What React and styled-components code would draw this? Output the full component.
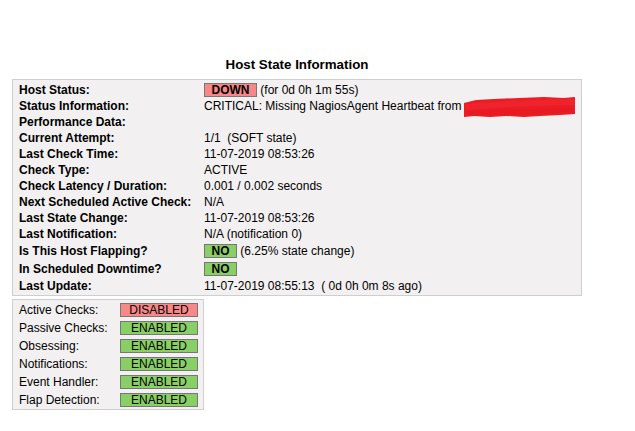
import React from 'react'
import styled, { createGlobalStyle } from 'styled-components'

const GlobalStyle = createGlobalStyle`
	body {
		margin: 0;
		background: #fff;
		color: #000;
		font-family: 'Liberation Sans', Arial, sans-serif;
		font-size: 12px;
	}
`

const PageX = styled.div`
	width: 570px;
	padding: 57px 0 0 12px;
`

const TitleX = styled.div`
	font-size: 13.33px;
	font-weight: 700;
	line-height: 16px;
	text-align: center;
	margin-bottom: 6px;
`

const StateBoxX = styled.div`
	border: 1px solid #cfcfcf;
	background: #f2f0f0;
	padding: 1px 6px;
`

const RowX = styled.div`
	display: grid;
	grid-template-columns: 185px 1fr;
	align-items: center;
	height: ${props => props.$h || 16}px;
	line-height: 14px;
	white-space: nowrap;
`

const LabelX = styled.span`
	font-weight: 700;
`

const ValueX = styled.span``

const BadgeX = styled.span`
	display: inline-block;
	line-height: 12px;
	padding: 0 6.5px;
	border: 1px solid #777;
	font-weight: 700;
	background: ${props => props.$ok ? '#88d066' : '#f88888'};
`

const RedactX = styled.span`
	position: relative;
	display: inline-block;
	width: 110px;
	height: 14px;
	vertical-align: top;

	svg {
		position: absolute;
		left: -1px;
		top: -4px;
	}
`

const ChecksBoxX = styled.div`
	display: inline-block;
	margin-top: 3px;
	border: 1px solid #cfcfcf;
	background: #f2f0f0;
	padding: 1px 5px 0 6px;
`

const CheckRowX = styled.div`
	display: grid;
	grid-template-columns: 101px 78px;
	align-items: center;
	height: 18px;
	line-height: 14px;
	white-space: nowrap;
`

const CheckBadgeX = styled.span`
	box-sizing: border-box;
	width: 78px;
	line-height: 12px;
	text-align: center;
	border: 1px solid #777;
	background: ${props => props.$ok ? '#88d066' : '#f88888'};
`

const Scribble = () => (
	<svg width="112" height="24" viewBox="0 0 112 24">
		<path d="M0 8 L12 5 L30 4 L55 3 L80 2 L100 3 L111 2 L111 19 L96 20 L76 21 L60 22 L42 21 L26 22 L10 21 L0 22 Z" fill="#ed1c24" />
		<path d="M4 12 C30 9 60 8 108 7" stroke="#f0262e" strokeWidth="6" strokeLinecap="round" fill="none" opacity="0.8" />
		<path d="M6 18 C35 17 70 17 106 15" stroke="#e51a22" strokeWidth="5" strokeLinecap="round" fill="none" opacity="0.8" />
	</svg>
)

const stateRows = [
	{ label: 'Performance Data:', value: '' },
	{ label: 'Current Attempt:', value: '1/1\u00a0\u00a0(SOFT state)' },
	{ label: 'Last Check Time:', value: '11-07-2019 08:53:26' },
	{ label: 'Check Type:', value: 'ACTIVE' },
	{ label: 'Check Latency / Duration:', value: '0.001 / 0.002 seconds' },
	{ label: 'Next Scheduled Active Check:', value: 'N/A' },
	{ label: 'Last State Change:', value: '11-07-2019 08:53:26' },
	{ label: 'Last Notification:', value: 'N/A (notification 0)' }
]

const checks = [
	{ label: 'Active Checks:', enabled: false },
	{ label: 'Passive Checks:', enabled: true },
	{ label: 'Obsessing:', enabled: true },
	{ label: 'Notifications:', enabled: true },
	{ label: 'Event Handler:', enabled: true },
	{ label: 'Flap Detection:', enabled: true }
]

const App = () => {

	return (
		<PageX>
			<GlobalStyle />
			<TitleX>Host State Information</TitleX>

			<StateBoxX>
				<RowX $h={17}>
					<LabelX>Host Status:</LabelX>
					<ValueX><BadgeX>DOWN</BadgeX> (for 0d 0h 1m 55s)</ValueX>
				</RowX>
				<RowX>
					<LabelX>Status Information:</LabelX>
					<ValueX>CRITICAL: Missing NagiosAgent Heartbeat from <RedactX><Scribble /></RedactX></ValueX>
				</RowX>

				{stateRows.map( row => (
					<RowX key={row.label}>
						<LabelX>{row.label}</LabelX>
						<ValueX>{row.value}</ValueX>
					</RowX>
				) )}

				<RowX $h={18}>
					<LabelX>Is This Host Flapping?</LabelX>
					<ValueX><BadgeX $ok>NO</BadgeX> (6.25% state change)</ValueX>
				</RowX>
				<RowX $h={18}>
					<LabelX>In Scheduled Downtime?</LabelX>
					<ValueX><BadgeX $ok>NO</BadgeX></ValueX>
				</RowX>
				<RowX>
					<LabelX>Last Update:</LabelX>
					<ValueX>11-07-2019 08:55:13&nbsp;&nbsp;( 0d 0h 0m 8s ago)</ValueX>
				</RowX>
			</StateBoxX>

			<ChecksBoxX>
				{checks.map( check => (
					<CheckRowX key={check.label}>
						<span>{check.label}</span>
						<CheckBadgeX $ok={check.enabled}>{check.enabled ? 'ENABLED' : 'DISABLED'}</CheckBadgeX>
					</CheckRowX>
				) )}
			</ChecksBoxX>
		</PageX>
	)

}

export default App
